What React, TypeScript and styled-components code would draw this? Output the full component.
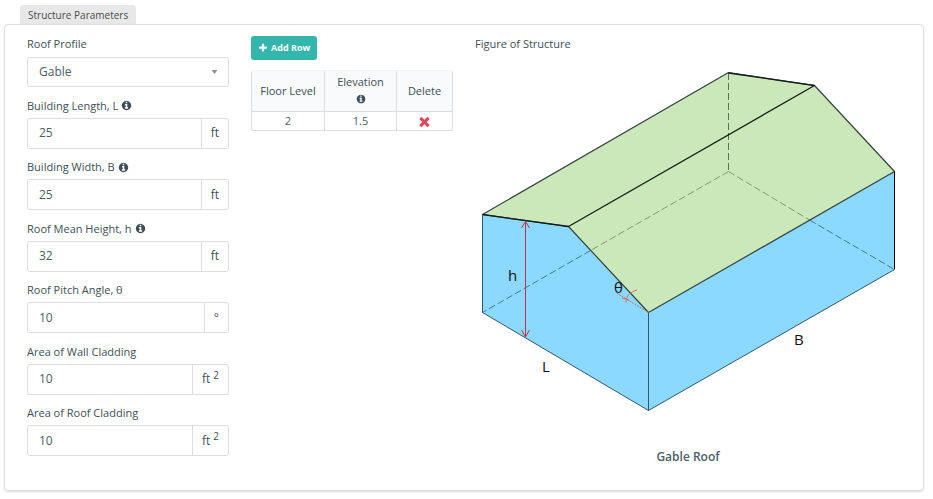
import React, { useState } from "react";
import styled, { createGlobalStyle } from "styled-components";

const GlobalStyle = createGlobalStyle`
  *, *::before, *::after { box-sizing: border-box; }
  body {
    margin: 0;
    background: #fff;
    color: #4c5e67;
    font-family: "Open Sans", "Noto Sans", sans-serif;
    font-size: 12px;
    line-height: 16px;
  }
  button, input, select { font: inherit; color: inherit; }
`;

const Page = styled.main`
  padding: 5px 9px 8px 4px;
`;

const Tab = styled.h1`
  width: fit-content;
  margin: 0 0 0 16px;
  padding: 2px 8px 1px;
  border-radius: 4px 4px 0 0;
  background: #e8e8e8;
  color: #4a4a4a;
  font-size: 10px;
  font-weight: 400;
`;

const Panel = styled.section`
  display: grid;
  grid-template-columns: repeat(4, minmax(0, 1fr));
  column-gap: 22px;
  padding: 11px 22px 23px;
  border: 1px solid #dcddde;
  border-radius: 4px;
  box-shadow: 0 1px 2px rgba(34, 36, 38, 0.15);
`;

const Fields = styled.form`
  display: flex;
  flex-direction: column;
  justify-content: space-between;
  padding-bottom: 11px;
`;

const Field = styled.div<{ $gap: number }>`
  display: grid;
  grid-template-columns: minmax(0, 1fr);
  row-gap: ${({ $gap }) => $gap}px;
`;

const Label = styled.label`
  display: flex;
  align-items: center;
  gap: 3px;
  color: #3d4f58;
  font-size: 11px;
  font-weight: 500;
`;

const SelectBox = styled.div`
  display: grid;
  align-items: center;
  > * { grid-area: 1 / 1; }
  > svg {
    justify-self: end;
    margin-right: 11px;
    pointer-events: none;
  }
`;

const Select = styled.select`
  appearance: none;
  width: 100%;
  height: 30px;
  padding: 0 11px;
  border: 1px solid #dcddde;
  border-radius: 3px;
  background: #fff;
`;

const InputGroup = styled.div`
  display: flex;
  height: 31px;
  border: 1px solid #dcddde;
  border-radius: 3px;
`;

const Input = styled.input`
  flex: 1;
  min-width: 0;
  padding: 0 11px;
  border: 0;
  border-radius: 3px;
  background: transparent;
`;

const Unit = styled.span`
  display: flex;
  align-items: center;
  gap: 3px;
  padding: 0 9px;
  border-left: 1px solid #dcddde;
  color: #3d4f58;
  font-weight: 500;
  sup {
    align-self: flex-start;
    font-size: 10px;
    line-height: 20px;
  }
`;

const AddButton = styled.button`
  display: flex;
  align-items: center;
  gap: 3px;
  height: 24px;
  padding: 0 7px;
  border: 0;
  border-radius: 3px;
  background: #35b6ad;
  color: #fff;
  font-size: 9px;
  font-weight: 700;
`;

const Table = styled.table`
  width: 100%;
  margin-top: 10px;
  table-layout: fixed;
  border: 1px solid #dcddde;
  border-top-color: #f3f4f5;
  border-radius: 3px;
  border-collapse: separate;
  border-spacing: 0;
  overflow: hidden;
  font-size: 11px;
  text-align: center;
`;

const Th = styled.th`
  height: 41px;
  padding: 2px 8px 3px;
  border-bottom: 1px solid #dcddde;
  background: #f9fafb;
  color: #3d4f58;
  font-weight: 500;
  line-height: 17px;
  white-space: nowrap;
  & + & { border-left: 1px solid #dcddde; }
  &:nth-child(-n + 2) { width: 36%; }
  svg { display: block; margin: 4px auto; }
`;

const Td = styled.td`
  height: 18px;
  padding: 0;
  & + & { border-left: 1px solid #dcddde; }
`;

const IconButton = styled.button`
  display: block;
  margin: 0 auto;
  padding: 0;
  border: 0;
  background: none;
  color: #dc4c5c;
  svg { display: block; }
`;

const Figure = styled.figure`
  grid-column: span 2;
  margin: 0;
`;

const FigureTitle = styled.h2`
  margin: 0;
  color: #3d4f58;
  font-size: 11px;
  font-weight: 500;
`;

const Drawing = styled.svg`
  display: block;
  width: 100%;
  margin-top: 8px;
  text {
    fill: #111;
    font-family: "Open Sans", sans-serif;
    font-size: 15px;
  }
`;

const Caption = styled.figcaption`
  margin-top: 27px;
  line-height: 20px;
  font-weight: 600;
  text-align: center;
`;

const iconPaths = {
  plus: "M1600 736v192q0 40-28 68t-68 28h-416v416q0 40-28 68t-68 28h-192q-40 0-68-28t-28-68v-416h-416q-40 0-68-28t-28-68v-192q0-40 28-68t68-28h416v-416q0-40 28-68t68-28h192q40 0 68 28t28 68v416h416q40 0 68 28t28 68z",
  times: "M1490 1322q0 40-28 68l-136 136q-28 28-68 28t-68-28l-294-294-294 294q-28 28-68 28t-68-28l-136-136q-28-28-28-68t28-68l294-294-294-294q-28-28-28-68t28-68l136-136q28-28 68-28t68 28l294 294 294-294q28-28 68-28t68 28l136 136q28 28 28 68t-28 68l-294 294 294 294q28 28 28 68z",
  info: "M1152 1376v-160q0-14-9-23t-23-9h-96v-512q0-14-9-23t-23-9h-320q-14 0-23 9t-9 23v160q0 14 9 23t23 9h96v320h-96q-14 0-23 9t-9 23v160q0 14 9 23t23 9h448q14 0 23-9t9-23zm-128-896v-160q0-14-9-23t-23-9h-192q-14 0-23 9t-9 23v160q0 14 9 23t23 9h192q14 0 23-9t9-23zm640 416q0 209-103 385.5t-279.5 279.5-385.5 103-385.5-103-279.5-279.5-103-385.5 103-385.5 279.5-279.5 385.5-103 385.5 103 279.5 279.5 103 385.5z",
};

function Icon({ name, size }: { name: keyof typeof iconPaths; size: number }) {
  return (
    <svg width={size} height={size} viewBox="0 0 1792 1792" fill="currentColor" aria-hidden="true">
      <path d={iconPaths[name]} />
    </svg>
  );
}

type Measure = { id: string; label: string; value: string; unit: string; squared?: boolean; info?: boolean };

const measures: Measure[] = [
  { id: "length", label: "Building Length, L", value: "25", unit: "ft", info: true },
  { id: "width", label: "Building Width, B", value: "25", unit: "ft", info: true },
  { id: "height", label: "Roof Mean Height, h", value: "32", unit: "ft", info: true },
  { id: "pitch", label: "Roof Pitch Angle, θ", value: "10", unit: "°" },
  { id: "wall", label: "Area of Wall Cladding", value: "10", unit: "ft", squared: true },
  { id: "roof", label: "Area of Roof Cladding", value: "10", unit: "ft", squared: true },
];

function MeasureField({ id, label, value, unit, squared, info }: Measure) {
  return (
    <Field $gap={4}>
      <Label htmlFor={id}>
        {label}
        {info && <Icon name="info" size={11} />}
      </Label>
      <InputGroup>
        <Input id={id} defaultValue={value} />
        <Unit>
          {unit}
          {squared && <sup>2</sup>}
        </Unit>
      </InputGroup>
    </Field>
  );
}

function GableRoof() {
  return (
    <Drawing viewBox="0 0 426 360" role="img" aria-label="Gable roof building">
      <path d="M7.5 154.5 93.5 166.5 173.5 252.5 419.5 111.5V209.5L173.5 350.5 7.5 252.5Z" fill="#8cd9ff" />
      <path d="M7.5 154.5 253.5 12.5 339.5 25.5 419.5 111.5 173.5 252.5 93.5 166.5Z" fill="#cbe8ba" />
      <g fill="none" strokeDasharray="7 3">
        <path d="M253.5 13V111.5" stroke="#58734d" />
        <path d="M253.5 111.5 334.5 160M253.5 111.5 115.5 190.5" stroke="#7f9b72" />
        <path d="M334.5 160 419.5 209.5M115.5 190.5 7.5 252.5" stroke="#3d7b99" />
      </g>
      <g fill="none" stroke="#34423c" strokeLinejoin="round">
        <path d="M7.5 154.5V252.5L173.5 350.5 419.5 209.5M173.5 252.5V350.5" stroke="#31586b" />
        <path d="M7.5 154.5 253.5 12.5 339.5 25.5 419.5 111.5 173.5 252.5 93.5 166.5Z" strokeWidth="1.2" />
        <path d="M7.5 154.5 93.5 166.5 339.5 25.5 253.5 13" stroke="#151c18" strokeWidth="1.3" />
        <path d="M419.5 111.5V209.5" stroke="#000" />
      </g>
      <g fill="none" stroke="#c4304f">
        <path d="M50.5 161V277M46.5 168 50.5 161.5 54.5 168M46.5 270 50.5 277 54.5 270" />
        <path d="M141.5 233 173.5 252.5" strokeDasharray="2 1" stroke="#bd7088" />
        <path d="M162 230C156 232 151 235 151 242.5M147 238 154 240" stroke="#d66b66" />
      </g>
      <text x="33" y="221">h</text>
      <text x="67" y="312">L</text>
      <text x="319" y="285">B</text>
      <text x="139" y="233">θ</text>
    </Drawing>
  );
}

export default function App() {
  const [rows, setRows] = useState([{ level: 2, elevation: "1.5" }]);

  return (
    <>
      <GlobalStyle />
      <Page>
        <Tab>Structure Parameters</Tab>
        <Panel>
          <Fields>
            <Field $gap={5}>
              <Label htmlFor="profile">Roof Profile</Label>
              <SelectBox>
                <Select id="profile" defaultValue="Gable">
                  <option>Gable</option>
                </Select>
                <svg width="7" height="4" viewBox="0 0 7 4" aria-hidden="true">
                  <path d="M.5 0h6L3.5 4Z" fill="#87929a" />
                </svg>
              </SelectBox>
            </Field>
            {measures.map((m) => (
              <MeasureField key={m.id} {...m} />
            ))}
          </Fields>

          <div>
            <AddButton
              type="button"
              onClick={() => setRows([...rows, { level: rows.length + 2, elevation: "1.5" }])}
            >
              <Icon name="plus" size={10} />
              Add Row
            </AddButton>
            <Table>
              <thead>
                <tr>
                  <Th>Floor Level</Th>
                  <Th>
                    Elevation
                    <Icon name="info" size={10} />
                  </Th>
                  <Th>Delete</Th>
                </tr>
              </thead>
              <tbody>
                {rows.map((row, i) => (
                  <tr key={row.level}>
                    <Td>{row.level}</Td>
                    <Td>{row.elevation}</Td>
                    <Td>
                      <IconButton
                        type="button"
                        aria-label="Delete row"
                        onClick={() => setRows(rows.filter((_, n) => n !== i))}
                      >
                        <Icon name="times" size={15} />
                      </IconButton>
                    </Td>
                  </tr>
                ))}
              </tbody>
            </Table>
          </div>

          <Figure>
            <FigureTitle>Figure of Structure</FigureTitle>
            <GableRoof />
            <Caption>Gable Roof</Caption>
          </Figure>
        </Panel>
      </Page>
    </>
  );
}
